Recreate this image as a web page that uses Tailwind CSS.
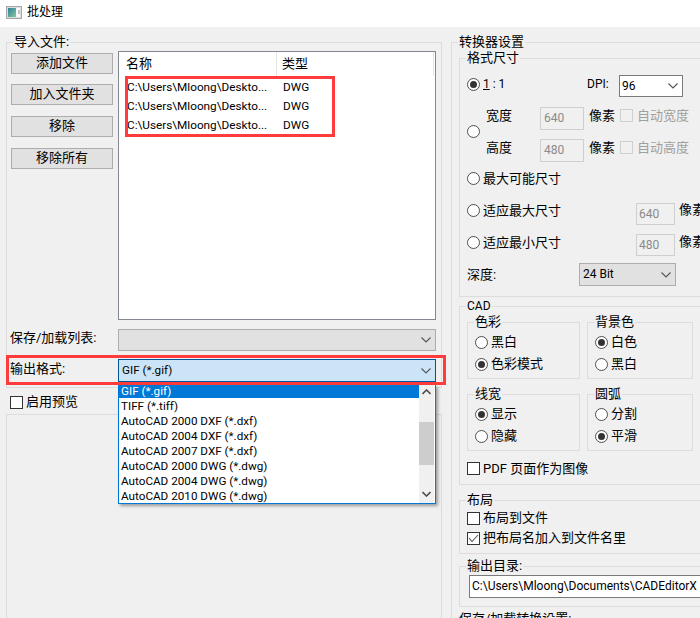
<!DOCTYPE html>
<html><head><meta charset="utf-8"><script src="https://cdn.jsdelivr.net/npm/@tailwindcss/browser@4"></script></head>
<body class="m-0">
<div class="relative w-[700px] h-[618px] overflow-hidden bg-[#f0f0f0] text-[13px] leading-[17px] text-[#000] font-['Roboto','Noto_Sans_CJK_SC',sans-serif]">
  <!-- title bar -->
  <div class="h-[27px] bg-white flex items-center pl-[6px] pb-[3px] text-[12px]">
    <svg width="16" height="13" viewBox="0 0 16 13" class="mr-[5px]"><defs><linearGradient id="ic" x1="0" y1="0" x2="1" y2="1"><stop offset="0" stop-color="#2f7f9a"/><stop offset="1" stop-color="#86c9a0"/></linearGradient></defs><rect x="0.5" y="0.5" width="15" height="12" fill="#dcdcdc" stroke="#a8a8a8"/><rect x="2" y="2" width="8" height="9" fill="url(#ic)"/><rect x="10" y="2" width="1" height="9" fill="#f4f4f4"/><rect x="11" y="2" width="3" height="9" fill="#fafafa"/><rect x="12" y="4" width="2" height="4" fill="#c4c4c4"/></svg>
    <span>批处理</span>
  </div>

  <div class="flex items-start pl-[6px] pt-[15px]">
    <!-- left column -->
    <div class="w-[436px] shrink-0">
      <div class="h-[346px] border border-[#dcdcdc]">
        <div class="-mt-[10px] mb-[1px] ml-[6px] w-fit bg-[#f0f0f0] px-px">导入文件:</div>
        <div class="flex items-start">
          <div class="w-[111px] pl-[4px] pt-[2px] shrink-0 flex flex-col gap-[10px]">
            <div class="w-[102px] h-[21px] pb-[2px] bg-[#e1e1e1] border border-[#adadad] flex items-center justify-center">添加文件</div>
            <div class="w-[102px] h-[21px] pb-[2px] bg-[#e1e1e1] border border-[#adadad] flex items-center justify-center">加入文件夹</div>
            <div class="w-[102px] h-[21px] pb-[2px] mt-px bg-[#e1e1e1] border border-[#adadad] flex items-center justify-center">移除</div>
            <div class="w-[102px] h-[21px] pb-[2px] mt-px bg-[#e1e1e1] border border-[#adadad] flex items-center justify-center">移除所有</div>
          </div>
          <div class="w-[318px] h-[269px] bg-white border border-[#828790] shrink-0">
            <div class="h-[24px] flex bg-white">
              <div class="w-[158px] pl-[7px] pb-[2px] border-r border-[#e5e5e5] flex items-center">名称</div>
              <div class="w-[157px] pl-[5px] pb-[2px] border-r border-[#e5e5e5] flex items-center">类型</div>
            </div>
            <div class="pt-[2px] text-[11.75px]">
              <div class="flex h-[19px] items-center"><span class="w-[164px] pl-[8px]">C:\Users\Mloong\Deskto...</span><span>DWG</span></div>
              <div class="flex h-[19px] items-center"><span class="w-[164px] pl-[8px]">C:\Users\Mloong\Deskto...</span><span>DWG</span></div>
              <div class="flex h-[19px] items-center"><span class="w-[164px] pl-[8px]">C:\Users\Mloong\Deskto...</span><span>DWG</span></div>
            </div>
          </div>
        </div>
        <div class="flex items-center mt-[9px] h-[22px]">
          <span class="w-[111px] pl-[3px] -mt-[6px]">保存/加载列表:</span>
          <div class="w-[318px] h-[22px] bg-[#e1e1e1] border border-[#adadad] flex items-center justify-end pr-[4px]">
            <svg width="10" height="6" viewBox="0 0 10 6"><path d="M0.5 0.5 L5 5 L9.5 0.5" fill="none" stroke="#555" stroke-width="1.1"/></svg>
          </div>
        </div>
        <div class="flex items-center mt-[8px] h-[23px]">
          <span class="w-[111px] pl-[3px] -mt-[5px]">输出格式:</span>
          <div class="w-[318px] h-[23px] bg-[#cce4f7] border border-[#005499] flex items-center justify-between pl-[3px] pr-[4px] text-[11.7px]">
            <span>GIF (*.gif)</span>
            <svg width="10" height="6" viewBox="0 0 10 6"><path d="M0.5 0.5 L5 5 L9.5 0.5" fill="none" stroke="#555" stroke-width="1.1"/></svg>
          </div>
        </div>
      </div>
      <div class="h-[26px] flex items-center pl-[4px] pt-[3px]">
        <span class="w-[13px] h-[13px] border border-[#333] bg-white mr-[3px]"></span><span class="-mt-[2px]">启用预览</span>
      </div>
      <div class="h-[300px] border border-[#dcdcdc]"></div>
    </div>

    <!-- right column -->
    <div class="ml-[9px] w-[300px] shrink-0 h-[600px] border-l border-t border-[#dcdcdc]">
      <div class="-mt-[10px] ml-[6px] w-fit bg-[#f0f0f0] px-px">转换器设置</div>
      <div class="ml-[7px] mt-[8px] h-[239px] border border-r-0 border-[#dcdcdc] w-[260px]">
        <div class="-mt-[10px] ml-[6px] w-fit bg-[#f0f0f0] px-px">格式尺寸</div>
        <!-- 1:1 -->
        <div class="flex items-center h-[22px] mt-[7px]">
          <span class="ml-[7px] w-[13px] h-[13px] rounded-full border border-[#505050] bg-white flex items-center justify-center"><span class="w-[7px] h-[7px] rounded-full bg-[#333]"></span></span>
          <span class="ml-[3px] w-[104px] text-[12px]"><span class="underline">1</span> : 1</span>
          <span class="w-[32px] text-[12px]">DPI:</span>
          <div class="w-[64px] h-[22px] mt-[4px] bg-white border border-[#7a7a7a] flex items-center justify-between pl-[2px] pr-[4px] text-[12px]"><span>96</span><svg width="10" height="6" viewBox="0 0 10 6"><path d="M0.5 0.5 L5 5 L9.5 0.5" fill="none" stroke="#555" stroke-width="1.1"/></svg></div>
        </div>
        <!-- width/height -->
        <div class="flex items-center mt-[9px]">
          <span class="ml-[7px] w-[13px] h-[13px] rounded-full border border-[#505050] bg-white shrink-0"></span>
          <div class="ml-[6px] flex flex-col gap-[9px]">
            <div class="flex items-center h-[23px]">
              <span class="w-[54px]">宽度</span>
              <span class="w-[44px] h-[23px] mt-[6px] border border-[#cfcfcf] text-[#8a8a8a] text-[12px] flex items-center pl-[3px]">640</span>
              <span class="ml-[5px] -mt-[1px] w-[31px]">像素</span>
              <span class="w-[13px] h-[13px] border border-[#cfcfcf]"></span>
              <span class="ml-[4px] -mt-[1px] text-[#a0a0a0]">自动宽度</span>
            </div>
            <div class="flex items-center h-[23px]">
              <span class="w-[54px]">高度</span>
              <span class="w-[44px] h-[23px] mt-[6px] border border-[#cfcfcf] text-[#8a8a8a] text-[12px] flex items-center pl-[3px]">480</span>
              <span class="ml-[5px] -mt-[1px] w-[31px]">像素</span>
              <span class="w-[13px] h-[13px] border border-[#cfcfcf]"></span>
              <span class="ml-[4px] -mt-[1px] text-[#a0a0a0]">自动高度</span>
            </div>
          </div>
        </div>
        <div class="flex items-center h-[20px] mt-[9px]">
          <span class="ml-[7px] w-[13px] h-[13px] rounded-full border border-[#505050] bg-white"></span>
          <span class="ml-[3px]">最大可能尺寸</span>
        </div>
        <div class="flex items-center h-[22px] mt-[11px]">
          <span class="ml-[7px] w-[13px] h-[13px] rounded-full border border-[#505050] bg-white"></span>
          <span class="ml-[3px] w-[153px]">适应最大尺寸</span>
          <span class="w-[39px] h-[22px] mt-[8px] border border-[#cfcfcf] text-[#8a8a8a] text-[12px] flex items-center pl-[2px]">640</span>
          <span class="ml-[4px] -mt-[2px] whitespace-nowrap">像素</span>
        </div>
        <div class="flex items-center h-[22px] mt-[10px]">
          <span class="ml-[7px] w-[13px] h-[13px] rounded-full border border-[#505050] bg-white"></span>
          <span class="ml-[3px] w-[153px]">适应最小尺寸</span>
          <span class="w-[39px] h-[22px] mt-[6px] border border-[#cfcfcf] text-[#8a8a8a] text-[12px] flex items-center pl-[2px]">480</span>
          <span class="ml-[4px] -mt-[2px] whitespace-nowrap">像素</span>
        </div>
        <div class="flex items-center h-[23px] mt-[10px]">
          <span class="ml-[7px] w-[112px]">深度:</span>
          <div class="w-[97px] h-[23px] bg-[#e1e1e1] border border-[#adadad] flex items-center justify-between pl-[3px] pr-[4px] text-[12px]"><span>24 Bit</span><svg width="10" height="6" viewBox="0 0 10 6"><path d="M0.5 0.5 L5 5 L9.5 0.5" fill="none" stroke="#555" stroke-width="1.1"/></svg></div>
        </div>
      </div>
      <!-- CAD -->
      <div class="ml-[7px] mt-[9px] h-[179px] w-[260px] border border-r-0 border-[#dcdcdc]">
        <div class="-mt-[9px] ml-[6px] w-fit bg-[#f0f0f0] px-px text-[12px]">CAD</div>
        <div class="grid grid-cols-[113px_106px] gap-x-[7px] gap-y-[15px] ml-[7px] mt-[7px]">
          <div class="h-[57px] border border-[#dcdcdc]">
            <div class="-mt-[10px] mb-[1px] ml-[6px] w-fit bg-[#f0f0f0] px-px">色彩</div>
            <div class="flex items-center h-[22px] pl-[7px]"><span class="w-[13px] h-[13px] rounded-full border border-[#505050] bg-white"></span><span class="ml-[3px] -mt-px">黑白</span></div>
            <div class="flex items-center h-[22px] pl-[7px]"><span class="w-[13px] h-[13px] rounded-full border border-[#505050] bg-white flex items-center justify-center"><span class="w-[7px] h-[7px] rounded-full bg-[#333]"></span></span><span class="ml-[3px] -mt-px">色彩模式</span></div>
          </div>
          <div class="h-[57px] border border-[#dcdcdc]">
            <div class="-mt-[10px] mb-[1px] ml-[6px] w-fit bg-[#f0f0f0] px-px">背景色</div>
            <div class="flex items-center h-[22px] pl-[7px]"><span class="w-[13px] h-[13px] rounded-full border border-[#505050] bg-white flex items-center justify-center"><span class="w-[7px] h-[7px] rounded-full bg-[#333]"></span></span><span class="ml-[3px] -mt-px">白色</span></div>
            <div class="flex items-center h-[22px] pl-[7px]"><span class="w-[13px] h-[13px] rounded-full border border-[#505050] bg-white"></span><span class="ml-[3px] -mt-px">黑白</span></div>
          </div>
          <div class="h-[57px] border border-[#dcdcdc]">
            <div class="-mt-[10px] mb-[1px] ml-[6px] w-fit bg-[#f0f0f0] px-px">线宽</div>
            <div class="flex items-center h-[22px] pl-[7px]"><span class="w-[13px] h-[13px] rounded-full border border-[#505050] bg-white flex items-center justify-center"><span class="w-[7px] h-[7px] rounded-full bg-[#333]"></span></span><span class="ml-[3px] -mt-px">显示</span></div>
            <div class="flex items-center h-[22px] pl-[7px]"><span class="w-[13px] h-[13px] rounded-full border border-[#505050] bg-white"></span><span class="ml-[3px] -mt-px">隐藏</span></div>
          </div>
          <div class="h-[57px] border border-[#dcdcdc]">
            <div class="-mt-[10px] mb-[1px] ml-[6px] w-fit bg-[#f0f0f0] px-px">圆弧</div>
            <div class="flex items-center h-[22px] pl-[7px]"><span class="w-[13px] h-[13px] rounded-full border border-[#505050] bg-white"></span><span class="ml-[3px] -mt-px">分割</span></div>
            <div class="flex items-center h-[22px] pl-[7px]"><span class="w-[13px] h-[13px] rounded-full border border-[#505050] bg-white flex items-center justify-center"><span class="w-[7px] h-[7px] rounded-full bg-[#333]"></span></span><span class="ml-[3px] -mt-px">平滑</span></div>
          </div>
        </div>
        <div class="flex items-center h-[17px] ml-[7px] mt-[9px]"><span class="w-[13px] h-[13px] border border-[#333] bg-white"></span><span class="ml-[3px] -mt-px">PDF 页面作为图像</span></div>
      </div>
      <!-- layout -->
      <div class="ml-[7px] mt-[15px] h-[54px] w-[260px] border border-r-0 border-[#dcdcdc]">
        <div class="-mt-[10px] mb-[1px] ml-[6px] w-fit bg-[#f0f0f0] px-px">布局</div>
        <div class="flex items-center h-[20px] ml-[7px] -mt-px"><span class="w-[13px] h-[13px] border border-[#333] bg-white"></span><span class="ml-[3px] -mt-px">布局到文件</span></div>
        <div class="flex items-center h-[20px] ml-[7px]"><span class="w-[13px] h-[13px] border border-[#333] bg-white flex items-center justify-center"><svg width="11" height="9" viewBox="0 0 11 9"><path d="M1 4 L4 7.5 L10 1" fill="none" stroke="#555" stroke-width="1.1"/></svg></span><span class="ml-[3px] -mt-px">把布局名加入到文件名里</span></div>
      </div>
      <!-- out dir -->
      <div class="ml-[7px] mt-[12px] h-[41px] w-[260px] border border-r-0 border-[#dcdcdc]">
        <div class="-mt-[10px] mb-[1px] ml-[6px] w-fit bg-[#f0f0f0] px-px">输出目录:</div>
        <div class="ml-[9px] w-[240px] h-[23px] bg-white border border-[#7a7a7a] flex items-center pl-[2px] text-[12px] whitespace-nowrap">C:\Users\Mloong\Documents\CADEditorX</div>
      </div>
      <div class="ml-[7px] mt-[3px] whitespace-nowrap">保存/加载转换设置:</div>
    </div>
  </div>

  <!-- red highlight frames -->
  <div class="absolute left-[125px] top-[76px] w-[210px] h-[61px] border-[3px] border-[#ff3b3b]"></div>
  <div class="absolute left-[6px] top-[355px] w-[440px] h-[30px] border-[3px] border-[#ff3b3b]"></div>

  <!-- dropdown list -->
  <div class="absolute left-[118px] top-[385px] w-[318px] h-[119px] bg-white border border-t-0 border-[#0078d7] shadow-[2px_2px_3px_rgba(0,0,0,0.35)] flex text-[11.7px] leading-[15px]">
    <div class="flex-1">
      <div class="bg-[#0078d7] text-white h-[13px] pl-[2px] mb-px overflow-hidden"><div class="-mt-[1px]">GIF (*.gif)</div></div>
      <div class="pl-[2px] h-[15px]">TIFF (*.tiff)</div>
      <div class="pl-[2px] h-[15px]">AutoCAD 2000 DXF (*.dxf)</div>
      <div class="pl-[2px] h-[15px]">AutoCAD 2004 DXF (*.dxf)</div>
      <div class="pl-[2px] h-[15px]">AutoCAD 2007 DXF (*.dxf)</div>
      <div class="pl-[2px] h-[15px]">AutoCAD 2000 DWG (*.dwg)</div>
      <div class="pl-[2px] h-[15px]">AutoCAD 2004 DWG (*.dwg)</div>
      <div class="pl-[2px] h-[15px]">AutoCAD 2010 DWG (*.dwg)</div>
    </div>
    <div class="w-[15px] mr-px bg-[#f0f0f0] flex flex-col items-center pt-[4px]">
      <svg width="9" height="6" viewBox="0 0 9 6"><path d="M0.5 5 L4.5 1 L8.5 5" fill="none" stroke="#505050" stroke-width="1.6"/></svg>
      <div class="w-[15px] h-[43px] bg-[#cdcdcd] mt-[27px]"></div>
      <svg class="mt-[26px]" width="9" height="6" viewBox="0 0 9 6"><path d="M0.5 1 L4.5 5 L8.5 1" fill="none" stroke="#505050" stroke-width="1.6"/></svg>
    </div>
  </div>
</div>
</body></html>
